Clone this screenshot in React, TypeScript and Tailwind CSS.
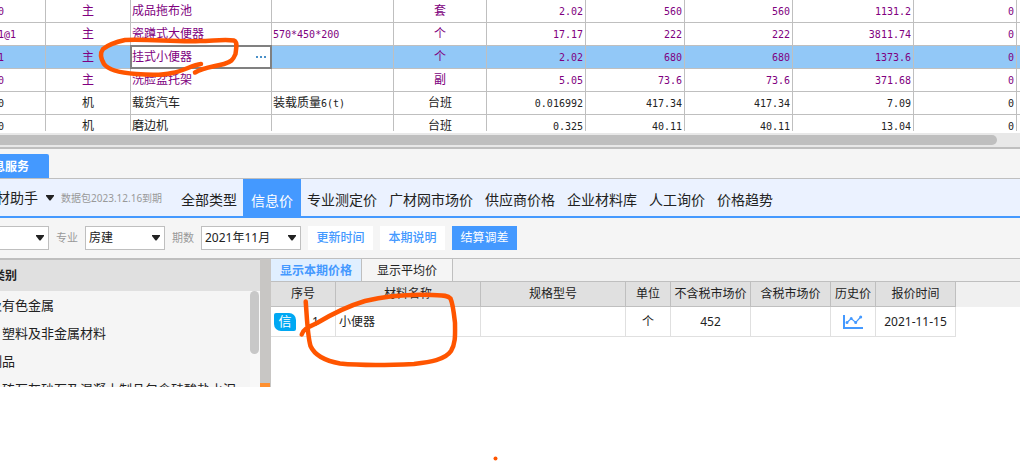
import {FC, ReactNode} from 'react';
import clsx from 'clsx';

interface IResource {
  code: string;
  type: string;
  name: string;
  spec?: string;
  specNote?: string;
  unit: string;
  values: string[];
  main?: boolean;
  selected?: boolean;
}

const resources: IResource[] = [
  {code: '0', type: '主', name: '成品拖布池', unit: '套', values: ['2.02', '560', '560', '1131.2', '0'], main: true},
  {code: '1@1', type: '主', name: '瓷蹲式大便器', specNote: '570*450*200', unit: '个', values: ['17.17', '222', '222', '3811.74', '0'], main: true},
  {code: '1', type: '主', name: '挂式小便器', unit: '个', values: ['2.02', '680', '680', '1373.6', '0'], main: true, selected: true},
  {code: '0', type: '主', name: '洗脸盆托架', unit: '副', values: ['5.05', '73.6', '73.6', '371.68', '0'], main: true},
  {code: '0', type: '机', name: '载货汽车', spec: '装载质量', specNote: '6(t)', unit: '台班', values: ['0.016992', '417.34', '417.34', '7.09', '0']},
  {code: '0', type: '机', name: '磨边机', unit: '台班', values: ['0.325', '40.11', '40.11', '13.04', '0']},
];

const priceTypes = ['全部类型', '信息价', '专业测定价', '广材网市场价', '供应商价格', '企业材料库', '人工询价', '价格趋势'];

const categories = ['及有色金属', '、塑料及非金属材料', '制品', '、砖瓦灰砂石及混凝土制品包含硅酸盐水泥'];

const Mono: FC<{children: ReactNode}> = ({children}) => (
  <span className="font-['DejaVu_Sans_Mono',monospace] text-[10px]">{children}</span>
);

const Arrow: FC<{className?: string}> = ({className}) => (
  <svg viewBox="0 0 8 6" className={clsx('w-2 h-[6px] fill-[#222]', className)}>
    <path d="M0 0h8v1L4.500 5.500h-1L0 1z" />
  </svg>
);

const ResourceRow: FC<{item: IResource}> = ({item}) => {
  const cell = 'h-[23px] border-r border-b border-[#bfbfbf] p-0 leading-[22px]';
  return (
    <tr className={clsx(item.main ? 'text-[#800080]' : 'text-[#222]', item.selected && 'bg-[#92c8f7]')}>
      <td className={cell}>
        <div className="-ml-0.5 h-[22px]"><Mono>{item.code}</Mono></div>
      </td>
      <td className={clsx(cell, 'text-center')}>{item.type}</td>
      <td className={cell}>
        {item.selected ? (
          <div className="flex h-[22px] items-center justify-between bg-white pl-px pr-1 outline-2 -outline-offset-1 outline-[#808080]">
            <span>{item.name}</span>
            <button type="button" aria-label="更多">
              <svg viewBox="0 0 11 2" className="h-0.5 w-[11px] fill-[#4a90c8]">
                <path d="M0 0h2v2H0zM4 0h2v2H4zM8 0h2v2H8z" />
              </svg>
            </button>
          </div>
        ) : (
          <div className="h-[22px] pl-px">{item.name}</div>
        )}
      </td>
      <td className={cell}>
        <div className="h-[22px] pl-px">
          {item.spec}
          {item.specNote && <Mono>{item.specNote}</Mono>}
        </div>
      </td>
      <td className={clsx(cell, 'text-center')}>{item.unit}</td>
      {item.values.map((value, i) => (
        <td key={i} className={cell}>
          <div className="h-[22px] pr-0.5 text-right"><Mono>{value}</Mono></div>
        </td>
      ))}
      <td className="border-b border-[#bfbfbf] p-0" />
    </tr>
  );
};

const ResourceTable = () => (
  <section>
    <div className="h-[131px] overflow-hidden">
      <table className="w-full table-fixed border-separate border-spacing-0 text-xs">
        <colgroup>
          <col className="w-[46px]" />
          <col className="w-[85px]" />
          <col />
          <col className="w-[122px]" />
          <col className="w-[93px]" />
          <col className="w-[99px]" />
          <col className="w-[99px]" />
          <col className="w-[108px]" />
          <col className="w-[121px]" />
          <col className="w-[103px]" />
          <col className="w-[3px]" />
        </colgroup>
        <tbody>
          {resources.map((item, i) => (
            <ResourceRow key={i} item={item} />
          ))}
        </tbody>
      </table>
    </div>
    <div className="mt-0.5 border-b-2 border-[#bfbfbf] bg-[#e8e8e8] py-0.5 pr-[23px]">
      <div className="h-[10px] rounded-r-full bg-[#bfbfbf]" />
    </div>
  </section>
);

const PriceTypeBar = () => (
  <nav className="flex h-10 border-t border-b-2 border-t-[#bfbfbf] border-b-[#4499ff] bg-[#ebf2ff] text-sm">
    <div className="flex w-[61px] shrink-0 items-center gap-2">
      <span className="flex w-[38px] justify-end whitespace-nowrap">材助手</span>
      <Arrow />
    </div>
    <span className="w-[114px] shrink-0 whitespace-nowrap text-[10px] leading-[38px] text-[#999]">数据包2023.12.16到期</span>
    {priceTypes.map(type => (
      <button
        key={type}
        type="button"
        className={clsx(
          'shrink-0 pt-1',
          type === '信息价' ? '-mb-0.5 bg-[#4499ff] px-2 text-white' : 'px-[6px]',
        )}>
        {type}
      </button>
    ))}
  </nav>
);

const Select: FC<{id: string; label?: string; value: string; className: string}> = ({id, label, value, className}) => (
  <div className={clsx('relative h-6', className)}>
    <select
      id={id}
      aria-label={label}
      defaultValue={value}
      className="h-full w-full appearance-none border border-[#bfbfbf] bg-white pl-[3px] text-xs">
      <option>{value}</option>
    </select>
    <Arrow className="pointer-events-none absolute right-[5px] top-[9px]" />
  </div>
);

const Filters = () => {
  const button = 'h-6 w-[65px]';
  return (
    <div className="flex h-10 items-center gap-[7px] whitespace-nowrap text-xs">
      <Select id="region" label="地区" value="" className="-ml-1 w-[53px]" />
      <label htmlFor="major" className="text-[11px] text-[#999]">专业</label>
      <Select id="major" value="房建" className="w-20" />
      <label htmlFor="period" className="text-[11px] text-[#999]">期数</label>
      <Select id="period" value="2021年11月" className="w-[100px]" />
      <button type="button" className={clsx(button, 'bg-white font-medium text-[#4499ff]')}>更新时间</button>
      <button type="button" className={clsx(button, 'bg-white font-medium text-[#4499ff]')}>本期说明</button>
      <button type="button" className={clsx(button, 'bg-[#4499ff] text-white')}>结算调差</button>
    </div>
  );
};

const Categories = () => (
  <aside className="w-[260px] shrink-0 overflow-hidden border-t border-[#bfbfbf]">
    <div className="bg-[#e0e0e0]">
      <h2 className="flex h-[31px] w-[17px] items-center justify-end whitespace-nowrap text-xs font-bold">类别</h2>
    </div>
    <div className="flex h-24 justify-between overflow-hidden bg-[#f5f5f5]">
      <ul className="-ml-[11px] whitespace-nowrap text-[13px] leading-7">
        {categories.map(name => (
          <li key={name}>{name}</li>
        ))}
      </ul>
      <div className="w-[10px] shrink-0 bg-[#f8f8f8] pr-px">
        <div className="h-[63px] rounded-full bg-[#c8c8c8]" />
      </div>
    </div>
  </aside>
);

const PriceTable = () => {
  const head = 'h-[25px] border-r border-b border-[#bfbfbf] bg-[#e0e0e0] p-0 font-normal';
  const cell = 'h-[30px] border-r border-b border-[#e0e0e0] p-0';
  return (
    <div className="bg-[linear-gradient(#f0f0f0_25px,#fff_25px)]">
      <table className="table-fixed border-separate border-spacing-0 text-center text-xs">
        <colgroup>
          <col className="w-[65px]" />
          <col className="w-[145px]" />
          <col className="w-[145px]" />
          <col className="w-[45px]" />
          <col className="w-20" />
          <col className="w-20" />
          <col className="w-[45px]" />
          <col className="w-20" />
        </colgroup>
        <thead>
          <tr>
            {['序号', '材料名称', '规格型号', '单位', '不含税市场价', '含税市场价', '历史价', '报价时间'].map(title => (
              <th key={title} scope="col" className={clsx(head, 'whitespace-nowrap')}>{title}</th>
            ))}
          </tr>
        </thead>
        <tbody>
          <tr>
            <td className={cell}>
              <div className="flex items-center gap-4 pl-[3px]">
                <span className="flex h-[18px] w-[22px] items-center justify-center rounded-[2px] rounded-tr-[7px] rounded-bl-[7px] bg-[#00a8f3] text-[13px] text-white">
                  信
                </span>
                1
              </div>
            </td>
            <td className={clsx(cell, 'pl-[3px] text-left')}>小便器</td>
            <td className={cell} />
            <td className={cell}>个</td>
            <td className={cell}>452</td>
            <td className={cell} />
            <td className={cell}>
              <button type="button" aria-label="历史价" className="mx-auto block">
                <svg viewBox="0 0 20 14" className="h-[14px] w-5 fill-none stroke-[#4499ff]">
                  <path d="M1 0v13h19" strokeWidth="2" />
                  <path d="M4 7.500l4.200-4 4.500 4 5-5.500" strokeWidth="1.200" />
                  <path d="M4 7.500h0M8.200 3.500h0M12.700 7.500h0M17.700 2h0" strokeWidth="3" strokeLinecap="round" />
                </svg>
              </button>
            </td>
            <td className={cell}>2021-11-15</td>
          </tr>
        </tbody>
      </table>
    </div>
  );
};

// hand-drawn marker strokes over the page
const Marks = () => (
  <svg
    viewBox="0 0 1020 461"
    className="pointer-events-none absolute left-0 top-0 h-[461px] w-[1020px] fill-none stroke-[#ff5500]"
    strokeWidth="4.500"
    strokeLinecap="round"
    strokeLinejoin="round">
    <path d="M201 64C192 65 184 71 172 73C160 76 148 75 136 74C122 73 109 71 104 64C101 59 100 53 103 49C108 45 116 42 125 40C150 39 175 42 200 41C212 41 224 39 234 40.500C238 42 236 49 235.500 54C233 60 231 62 224 64C213 67 204 67 195 72.500" />
    <path d="M305.700 301.500C307 318 307.500 336 310.500 346C315 356 326 361 340 363.500C365 366 392 365 414 364C430 362 445 360 451 351C456 343 455 333 455 323C454 314 453 304 450.500 298.500C447 294.500 440 295.500 432 295C410 294 386 296 365 301C345 307 332 314 317 323C309 327 303 329 301.700 334.500" />
    <circle cx="495.500" cy="458.500" r="2" className="fill-[#ff5500] stroke-none" />
  </svg>
);

const App = () => (
  <div className="relative min-h-screen overflow-hidden bg-white font-['Noto_Sans','Noto_Sans_CJK_SC',sans-serif] text-[#222]">
    <ResourceTable />
    <main className="bg-[#f5f5f5]">
      <div className="pt-[5px]">
        <button
          type="button"
          className="flex h-6 w-[49px] items-center justify-end whitespace-nowrap rounded-tr-[2px] bg-[#4499ff] pr-5 pt-0.5 text-xs font-bold text-white">
          息服务
        </button>
      </div>
      <PriceTypeBar />
      <Filters />
      <div className="flex border-t border-[#bfbfbf]">
        <Categories />
        <div className="flex w-[11px] shrink-0 flex-col justify-end bg-[#c8c6c4]">
          <div className="mr-px h-1 bg-[#ff9030]" />
        </div>
        <section className="min-w-0 grow bg-white">
          <div className="flex h-[23px] border-b border-[#bfbfbf] bg-[#f0f0f0] text-xs">
            <button type="button" className="w-[91px] border-r border-[#bfbfbf] bg-[#e0efff] pt-px font-bold text-[#4499ff]">显示本期价格</button>
            <button type="button" className="w-[91px] border-r border-[#bfbfbf] bg-[#f5f5f5] pt-px">显示平均价</button>
          </div>
          <PriceTable />
        </section>
      </div>
    </main>
    <Marks />
  </div>
);

export default App;
